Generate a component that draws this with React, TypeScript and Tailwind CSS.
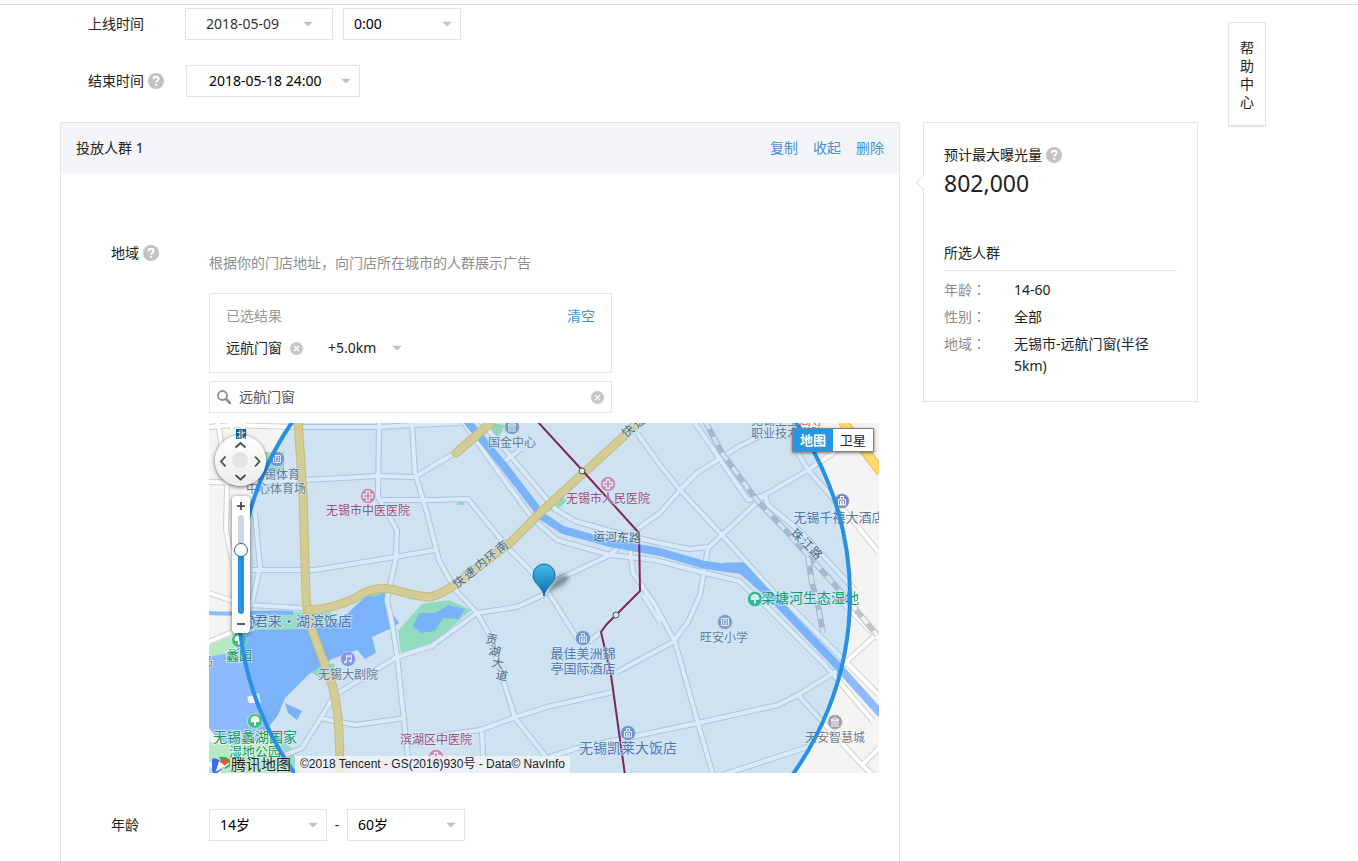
import React, { useState } from 'react';
import clsx from 'clsx';

const LABEL_FONT = '"Noto Sans CJK SC", sans-serif';

function Colon() {
  return <span className="font-['Noto_Sans_CJK_TC',sans-serif] leading-none">：</span>;
}

function HelpIcon({ label }: { label: string }) {
  return (
    <button type="button" aria-label={label} className="size-4 shrink-0">
      <svg viewBox="0 0 16 16" className="size-4">
        <circle cx="8" cy="8" r="8" fill="#c3c3c3" />
        <path d="M5.6 6.2c0-1.5 1-2.4 2.5-2.4s2.5.9 2.5 2.2c0 1.8-2.4 1.9-2.4 3.6" fill="none" stroke="#fff" strokeWidth="1.9" />
        <rect x="7.2" y="10.8" width="2" height="2" fill="#fff" />
      </svg>
    </button>
  );
}

function ClearIcon({ label }: { label: string }) {
  return (
    <button type="button" aria-label={label} className="size-[13px] shrink-0">
      <svg viewBox="0 0 13 13" className="size-[13px]">
        <circle cx="6.5" cy="6.5" r="6.5" fill="#c6c6c6" />
        <path d="M4 4l5 5M9 4l-5 5" stroke="#fff" strokeWidth="1.3" />
      </svg>
    </button>
  );
}

type DropdownProps = {
  label: string;
  options: string[];
  width: string;
  pad?: string;
  caret?: string;
  frame?: string;
};

function Dropdown({ label, options, width, pad = 'pl-2.5', caret = 'right-[9px]', frame = 'h-8 border border-[#e4e4e6] bg-white text-black' }: DropdownProps) {
  return (
    <div className={clsx('relative', width)}>
      <select aria-label={label} className={clsx('block w-full appearance-none pr-2 outline-none', frame, pad)}>
        {options.map((o) => (
          <option key={o}>{o}</option>
        ))}
      </select>
      <svg viewBox="0 0 10 5" className={clsx('pointer-events-none absolute top-1/2 h-[5px] w-2.5 -translate-y-1/2', caret)}>
        <path d="M0 0h10L5 5z" fill="#c1c1c1" />
      </svg>
    </div>
  );
}

const ROADS = [
  'M9 -3L18 64L17 107L23 137',
  'M0 4L23 2L86 4L169 4L226 1L250 0',
  'M23 0V6M34 0L36 30',
  'M0 59L40 60L96 57L169 53L206 54L235 36',
  'M170 0L169 74L188 107L187 134L178 177L183 200L188 232L199 335L201 350',
  'M203 0L206 50L218 90L230 137L248 170',
  'M170 77L226 77L259 76L299 125L321 147L341 172L368 215',
  'M43 147L106 147L186 134L226 127',
  'M46 90L51 144L43 180',
  'M0 170L24 178',
  'M221 45L246 30',
  'M296 38L312 26',
  'M221 224L268 190L308 184L334 172L348 157L401 132L431 104L451 90L471 67L488 50L529 24L549 14',
  'M428 10L451 42L471 67L513 112L569 174',
  'M392 209L381 218L368 215',
  'M240 160L268 190L279 209L303 285L306 295L338 335',
  'M226 222L188 234L126 272L93 325L76 332',
  'M111 295L146 302L196 295',
  'M39 182L93 185',
  'M0 219L23 209',
  'M201 318L248 310L271 307L304 295L338 284L404 269',
  'M273 309L274 335',
  'M300 345L338 335L368 325L451 308L489 300L569 282L589 272L626 249L670 209',
  'M408 249L464 219L479 199L491 172L499 125L513 112L556 72L599 47L630 26',
  'M420 118L424 150L431 160L446 182L466 219L489 300L504 352',
  'M434 172L451 199',
  'M589 30L599 47L646 100L670 130',
  'M486 0L539 77L556 72L559 82L593 110L646 167',
  'M589 272L653 342L670 325',
  'M513 352L599 324',
  'M653 342L664 352',
  'M250 -7L288 47L324 96L348 117L401 132L446 137L496 150L530 158L556 182L616 242L664 298',
  'M269 -5L310 43L346 86L366 98L401 108L446 119L480 126L499 124',
  'M574 176L638 240L670 272',
  'M0 340L12 352',
  'M626 172L670 216',
];

const CANAL = 'M258 -2L298 47L334 94L354 107L401 120L451 129L496 142L533 147L563 174L626 240L672 291';
const EXPRESSWAY = 'M99 187C125 186 142 178 155 170C180 158 195 174 221 174C240 170 260 150 301 120L334 87L414 14L434 -6';
const AVENUE = 'M89 -2L94 70L97 172C98 200 108 220 121 255C128 275 131 300 131 352';
const RAIL = 'M496 -2L513 30L546 75L579 110L633 170L668 212';
const RAIL_BRANCH = 'M599 134L603 160L609 182L614 210';
const METRO = 'M328 -2L373 47L430 110L431 168L397 202L392 209L402 252L416 352';

type Poi = { x: number; y: number; color: string; kind: 'cross' | 'building' | 'tree' | 'note' | 'book' | 'hotel' };

const POIS: Poi[] = [
  { x: 303, y: 4, color: '#8f9db4', kind: 'building' },
  { x: 68, y: 36, color: '#8794d4', kind: 'book' },
  { x: 159, y: 73, color: '#f4839c', kind: 'cross' },
  { x: 399, y: 61, color: '#f4839c', kind: 'cross' },
  { x: 633, y: 78, color: '#8187b8', kind: 'hotel' },
  { x: 546, y: 176, color: '#2fbe78', kind: 'tree' },
  { x: 516, y: 199, color: '#97a2b8', kind: 'book' },
  { x: 374, y: 215, color: '#7f97cc', kind: 'hotel' },
  { x: 139, y: 236, color: '#9c94ec', kind: 'note' },
  { x: 40, y: 199, color: '#7f97cc', kind: 'hotel' },
  { x: 30, y: 217, color: '#3dc476', kind: 'tree' },
  { x: 46, y: 298, color: '#3dc476', kind: 'tree' },
  { x: 227, y: 334, color: '#f4839c', kind: 'cross' },
  { x: 419, y: 310, color: '#7f97cc', kind: 'hotel' },
  { x: 626, y: 299, color: '#a39dab', kind: 'building' },
];

const GLYPHS: Record<Poi['kind'], React.ReactNode> = {
  cross: <path d="M-1.500 -4.500h3v3h3v3h-3v3h-3v-3h-3v-3h3z" strokeWidth="1.300" />,
  building: <path d="M-4 4h8M-3 3v-5M-1 3v-5M1 3v-5M3 3v-5M-4 -2L0 -4.500L4 -2z" />,
  tree: (
    <g fill="#fff">
      <path d="M0 -5C4 -5 5 -1 4 1H-4C-5 -1 -4 -5 0 -5z" stroke="none" />
      <path d="M0 0V4.500" strokeWidth="2" />
    </g>
  ),
  note: (
    <g fill="#fff">
      <path d="M-1.500 3V-3.500L3.500 -4V2M-1.500 -2L3.500 -2.500" fill="none" />
      <circle cx="-2.500" cy="3" r="1" />
      <circle cx="2.500" cy="2" r="1" />
    </g>
  ),
  book: <path d="M-3.500 -3.500h7v7h-7zM-1.500 -2v4h3v-4z" />,
  hotel: <path d="M-3.500 4V-1.500h2V-4.500h3v3h2V4zM-1.500 0v4M0 -3v7M1.500 0v4" />,
};

type MapLabel = { t: string; x: number; y: number; color: string; size?: number; rotate?: number };

const BLUE = '#5a70a2';
const GRAY = '#6f7784';
const GREEN = '#0f9a52';
const ROSE = '#b8405f';
const ROAD = '#565c64';

const LABELS: MapLabel[] = [
  { t: '国金中心', x: 303, y: 20, color: GRAY },
  { t: '无锡体育', x: 67, y: 52, color: GRAY },
  { t: '中心体育场', x: 67, y: 66, color: GRAY },
  { t: '无锡市中医医院', x: 159, y: 88, color: ROSE },
  { t: '无锡市人民医院', x: 399, y: 76, color: ROSE },
  { t: '运河东路', x: 408, y: 115, color: ROAD, rotate: 3 },
  { t: '无锡千禧大酒店', x: 630, y: 95, color: BLUE, size: 13 },
  { t: '无锡卫生高等', x: 578, y: -2, color: GRAY },
  { t: '职业技术学院', x: 578, y: 11, color: GRAY },
  { t: '君来·湖滨饭店', x: 94, y: 199, color: BLUE, size: 14 },
  { t: '蠡园', x: 30, y: 233, color: GREEN, size: 13 },
  { t: '无锡蠡湖国家', x: 46, y: 315, color: GREEN, size: 14 },
  { t: '湿地公园', x: 46, y: 329, color: GREEN, size: 13 },
  { t: '无锡大剧院', x: 139, y: 252, color: GRAY },
  { t: '滨湖区中医院', x: 227, y: 317, color: ROSE },
  { t: '最佳美洲錦', x: 374, y: 231, color: BLUE, size: 13 },
  { t: '亭国际酒店', x: 374, y: 246, color: BLUE, size: 13 },
  { t: '无锡凯莱大饭店', x: 419, y: 326, color: BLUE, size: 14 },
  { t: '旺安小学', x: 515, y: 215, color: GRAY },
  { t: '梁塘河生态湿地', x: 601, y: 176, color: GREEN, size: 14 },
  { t: '天安智慧城', x: 626, y: 315, color: GRAY },
  { t: '岛', x: -2, y: 239, color: GRAY },
  { t: '贡', x: 283, y: 217, color: ROAD, rotate: 12 },
  { t: '湖', x: 286, y: 229, color: ROAD, rotate: 12 },
  { t: '大', x: 289, y: 241, color: ROAD, rotate: 12 },
  { t: '道', x: 293, y: 253, color: ROAD, rotate: 12 },
  { t: '快', x: 249, y: 160, color: ROAD, rotate: -38 },
  { t: '速', x: 260, y: 151, color: ROAD, rotate: -38 },
  { t: '内', x: 271, y: 142, color: ROAD, rotate: -38 },
  { t: '环', x: 281, y: 134, color: ROAD, rotate: -38 },
  { t: '南', x: 292, y: 125, color: ROAD, rotate: -38 },
  { t: '快', x: 418, y: 9, color: ROAD, rotate: -40 },
  { t: '速', x: 429, y: 0, color: ROAD, rotate: -40 },
  { t: '珠', x: 589, y: 113, color: ROAD, rotate: 45 },
  { t: '江', x: 599, y: 122, color: ROAD, rotate: 45 },
  { t: '路', x: 608, y: 131, color: ROAD, rotate: 45 },
];

function MapCanvas() {
  return (
    <svg viewBox="0 0 670 350" preserveAspectRatio="xMidYMid slice" className="block h-full w-full" role="img" aria-label="无锡市地图">
      <defs>
        <linearGradient id="pin" x1="0" y1="0" x2="0" y2="1">
          <stop offset="0" stopColor="#45bbe9" />
          <stop offset="1" stopColor="#0b6fa8" />
        </linearGradient>
        <filter id="soft">
          <feGaussianBlur stdDeviation="2" />
        </filter>
      </defs>
      <rect width="670" height="350" fill="#f6f4f3" />

      <path d="M55 29H75V50H55zM281 0L296 2L290 14L276 6zM340 84L353 73L358 78L344 90zM248 79h7v3h-7zM100 248L125 240L128 258L110 254z" fill="#a6e8ae" />
      <path d="M0 222L20 214L45 208L48 190L120 188L132 200L100 210L40 220L0 236z" fill="#b4eac0" />
      <path d="M0 318L14 322L60 305L82 325L92 352H0z" fill="#b9e8c5" />
      <path d="M189 208L213 181L240 177L262 187L245 202L226 219L192 230z" fill="#acecb4" />
      <path
        d="M0 234L26 228L36 212L46 207L100 206L130 200L143 186L158 172L172 168L180 174L183 190L190 200L183 205L163 214L167 230L156 236L148 227L123 236L99 252L76 275L69 292L59 305L48 318L24 322L10 318L0 305z"
        fill="#8ebaff"
      />
      <path d="M0 190C20 192 60 188 84 190" fill="none" stroke="#8ebaff" strokeWidth="4" />
      <path d="M204 203L210 190L226 190L240 182L256 186L250 196L234 195L226 208L212 210z" fill="#8ebaff" />
      <path d="M76 280L93 288L88 297L79 290z" fill="#8ebaff" />
      <path d="M38 274L50 270L52 280L40 280z" fill="#f6f4f3" />
      <path d="M160 168L170 165L172 172L162 174z" fill="#a6e8ae" />

      <g fill="none" strokeLinejoin="round">
        {ROADS.map((d) => (
          <path key={d} d={d} stroke="#cfd0d3" strokeWidth="6" />
        ))}
        {ROADS.map((d) => (
          <path key={d} d={d} stroke="#ffffff" strokeWidth="4" />
        ))}
        <path d={CANAL} stroke="#8ebaff" strokeWidth="8" />
        <path d="M515 143L534 143L566 178" stroke="#8ebaff" strokeWidth="7" />
        <path d="M633 -2L672 49" stroke="#f0b93c" strokeWidth="10" />
        <path d="M633 -2L672 49" stroke="#fddb6c" strokeWidth="8" />
        {[AVENUE, EXPRESSWAY, 'M247 30L284 -2'].map((d) => (
          <g key={d} strokeLinecap="round">
            <path d={d} stroke="#eac558" strokeWidth="9" />
            <path d={d} stroke="#fcd984" strokeWidth="7" />
          </g>
        ))}
        {[RAIL, RAIL_BRANCH].map((d) => (
          <g key={d}>
            <path d={d} stroke="#c2c2c5" strokeWidth="6" />
            <path d={d} stroke="#f4f4f4" strokeWidth="4" strokeDasharray="9 9" />
          </g>
        ))}
      </g>

      {POIS.map((p) => (
        <g key={`${p.x}-${p.y}`} transform={`translate(${p.x} ${p.y})`} fill="none" stroke="#fff" strokeWidth="1">
          <circle r="7.500" fill={p.color} strokeOpacity="0.5" />
          {GLYPHS[p.kind]}
        </g>
      ))}

      <path d={METRO} fill="none" stroke="#8f0f33" strokeWidth="2" strokeLinejoin="round" />
      <circle cx="373" cy="48" r="3" fill="#fff" stroke="#444" />
      <circle cx="407" cy="192" r="3" fill="#fff" stroke="#444" />

      <g transform="translate(0 -2)" textAnchor="middle" dominantBaseline="central" fontFamily={LABEL_FONT} stroke="#fff" strokeOpacity="0.6" strokeWidth="2" paintOrder="stroke">
        {LABELS.map((l) => (
          <text
            key={`${l.t}-${l.x}`}
            x={l.x}
            y={l.y}
            fill={l.color}
            fontSize={l.size ?? 12}
            transform={l.rotate ? `rotate(${l.rotate} ${l.x} ${l.y})` : undefined}
          >
            {l.t}
          </text>
        ))}
      </g>

      <circle cx="335" cy="173" r="306" fill="#2a94ea" fillOpacity="0.19" stroke="#2590e6" strokeWidth="4" />

      <path d="M335 173L346 156C352 150 362 150 359 157C356 163 345 165 335 173z" fill="#3a4a55" fillOpacity="0.55" filter="url(#soft)" />
      <path d="M335 173C334 164 324 161 324 152A11 11 0 0 1 346 152C346 161 336 164 335 173z" fill="url(#pin)" stroke="#0d6ea3" />
    </svg>
  );
}

const PAN = [
  { label: '向上', place: 'left-[19px] top-1', d: 'M1.500 8.500L6.500 4L11.500 8.500' },
  { label: '向左', place: 'left-0.5 top-5', d: 'M8.500 1.500L4 6.500L8.500 11.500' },
  { label: '向右', place: 'right-0.5 top-5', d: 'M4 1.500L8.500 6.500L4 11.500' },
  { label: '向下', place: 'bottom-0.5 left-[19px]', d: 'M1.500 4L6.500 8.500L11.500 4' },
];

function MapControls() {
  const [zoom, setZoom] = useState(65);
  const [view, setView] = useState('地图');
  return (
    <>
      <div className="absolute left-1.5 top-3 size-[51px] rounded-full bg-gradient-to-b from-white to-[#ececec] shadow-[0_1px_4px_rgba(0,0,0,0.6)]">
        <div className="absolute left-[17px] top-[17px] size-4 rounded-full bg-[#e4e4e4]" />
        {PAN.map((p) => (
          <button key={p.label} type="button" aria-label={p.label} className={clsx('absolute size-[13px]', p.place)}>
            <svg viewBox="0 0 13 13" className="size-[13px]" fill="none" stroke="#4a4a4a" strokeWidth="1.800">
              <path d={p.d} />
            </svg>
          </button>
        ))}
      </div>
      <svg viewBox="0 0 10 10" className="absolute left-[27px] top-1.5 size-2.5">
        <rect width="10" height="10" fill="#0d6191" />
        <text x="5" y="8.500" textAnchor="middle" fontFamily={LABEL_FONT} fontSize="9" fill="#fff">北</text>
      </svg>
      <div className="absolute left-[23px] top-[73px] flex h-[137px] w-[18px] flex-col items-center justify-between rounded-sm bg-white shadow-[0_1px_4px_rgba(0,0,0,0.6)]">
        <button type="button" aria-label="放大" className="flex h-[19px] w-full items-center justify-center">
          <svg viewBox="0 0 10 10" className="size-2.5"><path d="M1 5h8M5 1v8" stroke="#333" strokeWidth="1.600" /></svg>
        </button>
        <div className="relative w-1.5 flex-1 overflow-visible rounded-full bg-[#ced6e4]">
          <div className="absolute inset-x-0 bottom-0 rounded-full bg-[#2296e6]" style={{ height: `${zoom}%` }} />
          <div className="absolute -left-1 size-3.5 translate-y-1/2 rounded-full border border-[#1c6fae] bg-white shadow-sm" style={{ bottom: `${zoom}%` }} />
          <input
            type="range"
            aria-label="缩放级别"
            value={zoom}
            onChange={(e) => setZoom(Number(e.target.value))}
            className="absolute inset-y-0 -left-1 h-full w-3.5 opacity-0 [direction:rtl] [writing-mode:vertical-lr]"
          />
        </div>
        <button type="button" aria-label="缩小" className="flex h-[19px] w-full items-center justify-center">
          <svg viewBox="0 0 10 10" className="size-2.5"><path d="M1 5h8" stroke="#333" strokeWidth="1.600" /></svg>
        </button>
      </div>
      <div className="absolute right-[5px] top-[5px] flex h-6 border border-[#7d8388] text-[13px] shadow-[0_1px_3px_rgba(0,0,0,0.5)]">
        {['地图', '卫星'].map((v) => (
          <button
            key={v}
            type="button"
            onClick={() => setView(v)}
            className={clsx('flex w-10 items-center justify-center', view === v ? 'bg-[#2396e8] font-bold text-white' : 'bg-white text-[#222]')}
          >
            {v}
          </button>
        ))}
      </div>
      <div className="absolute bottom-0 left-[3px] flex h-[17px] items-center">
        <svg viewBox="0 0 19 18" className="h-[18px] w-[19px]">
          <path d="M7 1C12 0 16 1 18 4V10L13 13z" fill="#22b55c" />
          <path d="M1 4C0 4 0 5 0 6V14C0 17 3 18 5 17L8 15L17 8L6 6z" fill="#fff" />
          <path d="M1 2.500C0 2.500 0 4 0 5V14C0 17 3 18.500 6 16.500L13 11L8 5C6 3 3 2 1 2.500z" fill="#376cf4" />
          <path d="M3 16L9 6L18 7L12 12z" fill="#fff" fillOpacity="0.6" />
          <path d="M7 5L18 3L13 10z" fill="#f4502f" />
          <path d="M7 5L13 10L4 15z" fill="#fff" />
        </svg>
        <span className="text-[15px] leading-[17px] text-[#222] [text-shadow:0_0_2px_#fff]">腾讯地图</span>
        <span className="ml-1 whitespace-nowrap bg-[#f5f6f7]/75 px-[5px] font-['Liberation_Sans','Noto_Sans_CJK_SC',sans-serif] text-xs leading-[17px] text-[#222]">
          ©2018 Tencent - GS(2016)930号 - Data© NavInfo
        </span>
      </div>
    </>
  );
}

const LINK = 'text-[#4591d8]';

export default function App() {
  const [keyword, setKeyword] = useState('远航门窗');
  return (
    <div className="flex min-h-screen flex-col bg-white pt-1 font-['Noto_Sans','Noto_Sans_CJK_SC',sans-serif] text-sm leading-5 text-[#222]">
      <div className="border-t border-[#dcdcdc]" />
      <a
        href="#help"
        className="absolute right-[92px] top-[22px] flex w-[38px] justify-center border border-[#e2e2e2] bg-white px-[11px] pb-3.5 pt-4 text-center leading-[18px] shadow-[0_1px_1px_rgba(0,0,0,0.1)]"
      >
        帮助中心
      </a>

      <section className="flex flex-col gap-[25px] pb-[25px] pl-[88px] pt-[3px]">
        <div className="flex items-center">
          <span className="w-[97px] shrink-0">上线时间</span>
          <div className="flex gap-2.5">
            <Dropdown label="上线日期" options={['2018-05-09']} width="w-[148px]" pad="pl-5" caret="right-5" frame="h-8 border border-[#e4e4e6] bg-white text-[#333]" />
            <Dropdown label="上线时刻" options={['0:00', '1:00']} width="w-[118px]" />
          </div>
        </div>
        <div className="flex items-center">
          <span className="flex w-[98px] shrink-0 items-center gap-1">
            结束时间
            <HelpIcon label="结束时间说明" />
          </span>
          <Dropdown label="结束时间" options={['2018-05-18 24:00']} width="w-[174px]" pad="pl-[22px]" />
        </div>
      </section>

      <div className="flex flex-1 items-start gap-[23px] pl-[60px] pr-40">
        <main className="min-w-0 flex-1 self-stretch border border-b-0 border-[#e4e5e9] pb-5">
          <header className="flex h-[50px] items-center justify-between bg-[#f3f5f9] px-[15px]">
            <h2>投放人群 1</h2>
            <nav className="flex gap-[15px]">
              <a href="#copy" className={LINK}>复制</a>
              <a href="#fold" className={LINK}>收起</a>
              <a href="#delete" className={LINK}>删除</a>
            </nav>
          </header>

          <section className="flex pl-[50px] pr-5 pt-[70px]">
            <div className="flex w-[98px] shrink-0 items-center gap-1 self-start">
              地域
              <HelpIcon label="地域说明" />
            </div>
            <div className="min-w-0 flex-1 pt-2.5">
              <p className="text-[#8d8d8d]">根据你的门店地址，向门店所在城市的人群展示广告</p>

              <div className="mt-5 flex h-20 max-w-[403px] flex-col gap-3 border border-[#e4e4e6] px-4 pt-3">
                <div className="flex justify-between">
                  <span className="text-[#9a9a9a]">已选结果</span>
                  <button type="button" className="text-[#3a93dd]">清空</button>
                </div>
                <div className="flex items-center">
                  <span>远航门窗</span>
                  <span className="ml-2 mr-[25px] flex"><ClearIcon label="移除远航门窗" /></span>
                  <Dropdown label="半径" options={['+5.0km', '+3.0km']} width="w-[74px]" pad="pl-0" caret="right-0" frame="h-5 bg-transparent text-[#222]" />
                </div>
              </div>

              <div className="mt-2 flex h-8 max-w-[403px] items-center border border-[#e4e4e6] px-[7px]">
                <svg viewBox="0 0 14 14" className="size-3.5 shrink-0" fill="none" stroke="#8f8f8f">
                  <circle cx="5.500" cy="5.500" r="4.500" strokeWidth="1.800" />
                  <path d="M9 9l4 4" strokeWidth="2.600" strokeLinecap="round" />
                </svg>
                <input
                  type="text"
                  aria-label="搜索地址"
                  value={keyword}
                  onChange={(e) => setKeyword(e.target.value)}
                  className="min-w-0 flex-1 px-2 text-[#555] outline-none"
                />
                <ClearIcon label="清除搜索" />
              </div>

              <div className="relative mt-2.5 h-[350px] overflow-hidden">
                <MapCanvas />
                <MapControls />
              </div>
            </div>
          </section>

          <section className="flex items-center pl-[50px] pr-5 pt-9">
            <span className="w-[98px] shrink-0">年龄</span>
            <div className="flex items-center">
              <Dropdown label="最小年龄" options={['14岁', '18岁']} width="w-[118px]" />
              <span className="w-5 text-center">-</span>
              <Dropdown label="最大年龄" options={['60岁', '50岁']} width="w-[118px]" />
            </div>
          </section>
        </main>

        <aside className="relative w-[275px] shrink-0 border border-[#e2e3e6] px-5 pb-6 pt-[22px]">
          <div className="absolute -left-1.5 top-[54px] size-[11px] rotate-45 border-b border-l border-[#e2e3e6] bg-white" />
          <div className="flex items-center gap-1">
            预计最大曝光量
            <HelpIcon label="预计最大曝光量说明" />
          </div>
          <p className="text-[23px] leading-9">802,000</p>
          <h3 className="mt-[42px] border-b border-[#e4e4e6] pb-[7px]">所选人群</h3>
          <dl className="mt-2 grid grid-cols-[70px_1fr] gap-y-[5px] leading-[22px]">
            <dt className="text-[#8d8d8d]">年龄<Colon /></dt>
            <dd>14-60</dd>
            <dt className="text-[#8d8d8d]">性别<Colon /></dt>
            <dd>全部</dd>
            <dt className="text-[#8d8d8d]">地域<Colon /></dt>
            <dd>无锡市-远航门窗(半径5km)</dd>
          </dl>
        </aside>
      </div>
    </div>
  );
}
